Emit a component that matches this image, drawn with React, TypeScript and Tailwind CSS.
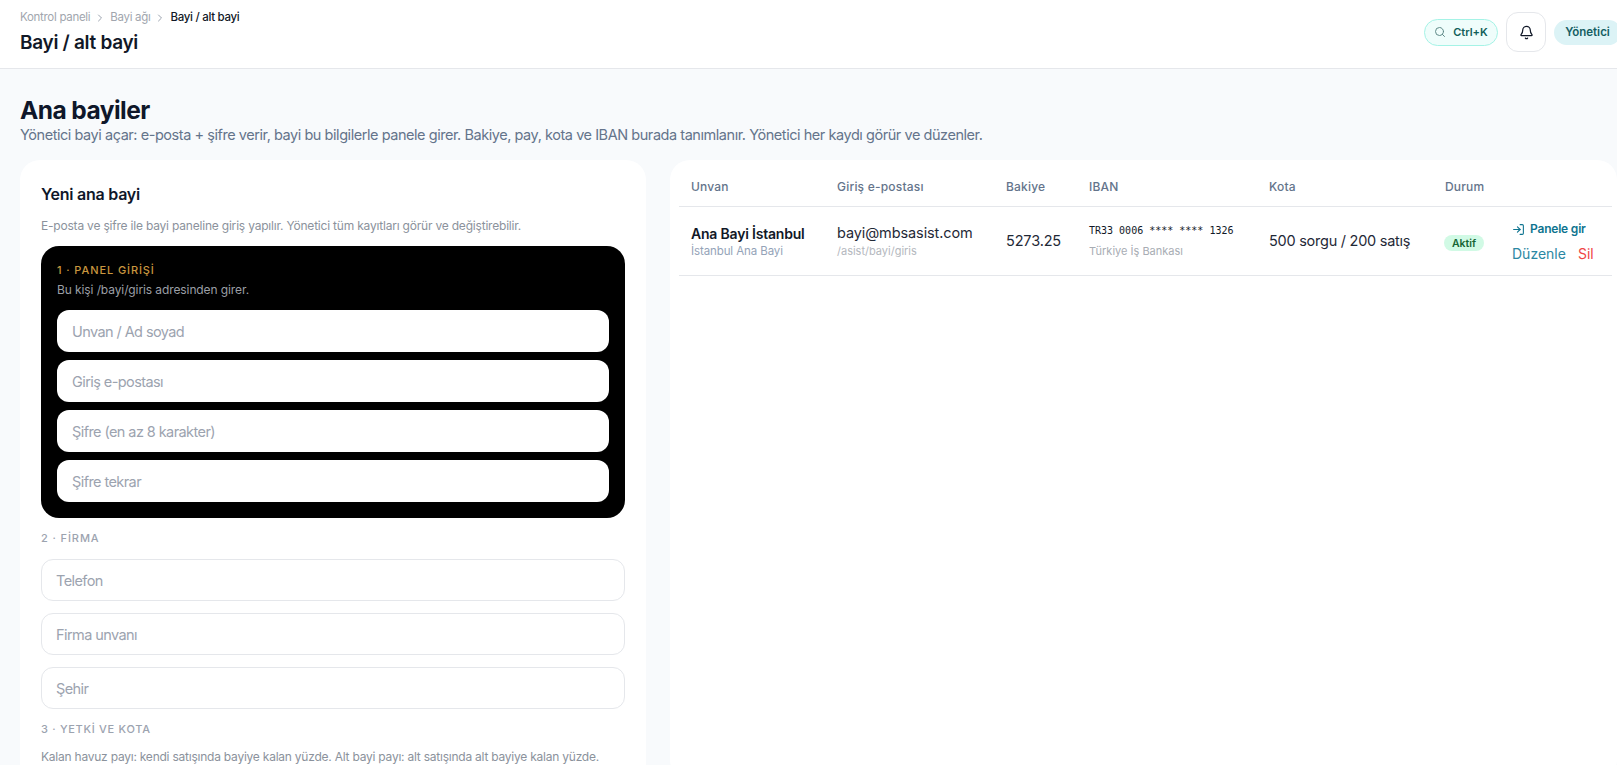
import React from 'react';
import { ChevronRight, Search, Bell, LogIn } from 'lucide-react';

const darkFields = ['Unvan / Ad soyad', 'Giriş e-postası', 'Şifre (en az 8 karakter)', 'Şifre tekrar'];
const firmFields = ['Telefon', 'Firma unvanı', 'Şehir'];

export default function App() {
  return (
    <div className="w-[1617px] h-[765px] overflow-hidden bg-[#f8fafc] font-['Inter',sans-serif] text-[#0f172a]">
      {/* Top bar */}
      <header className="h-[69px] bg-white border-b border-[#e5e7eb] pl-5 flex justify-between items-start">
        <div className="pt-[9px]">
          <div className="flex items-center gap-1 text-[11.5px] leading-[17px] tracking-[-0.3px] text-[#a1a6ae]">
            <span>Kontrol paneli</span>
            <ChevronRight className="w-3 h-3 text-[#9ca3af]" />
            <span>Bayi ağı</span>
            <ChevronRight className="w-3 h-3 text-[#9ca3af]" />
            <span className="text-[#111827] font-medium">Bayi / alt bayi</span>
          </div>
          <h2 className="mt-1 text-[19px] leading-[26px] font-semibold tracking-[-0.3px] text-[#111827]">Bayi / alt bayi</h2>
        </div>
        <div className="flex items-center gap-2 mr-[-4px] mt-3 shrink-0">
          <div className="h-[27px] w-[74px] rounded-full border border-[#a5f3e6] bg-[#effdfb] flex items-center justify-center gap-[7px] text-[11px] font-semibold text-[#115e59]">
            <Search className="w-3 h-3 text-[#5f8a88]" />
            <span>Ctrl+K</span>
          </div>
          <button className="w-10 h-10 rounded-xl border border-[#e5e7eb] bg-white flex items-center justify-center">
            <Bell className="w-[15px] h-[15px] text-[#111827]" />
          </button>
          <div className="h-[25px] w-[67px] pt-px rounded-full bg-[#dcf3f6] flex items-center justify-center text-[11.5px] font-semibold text-[#155e63]">
            Yönetici
          </div>
        </div>
      </header>

      <main className="px-5 pt-[26px]">
        <h1 className="text-[24.5px] leading-[30px] font-bold tracking-[-0.55px] text-[#0f172a]">Ana bayiler</h1>
        <p className="text-[14.5px] leading-[20px] tracking-[-0.45px] text-[#64748b]">
          Yönetici bayi açar: e-posta + şifre verir, bayi bu bilgilerle panele girer. Bakiye, pay, kota ve IBAN burada tanımlanır. Yönetici her kaydı görür ve düzenler.
        </p>

        <div className="mt-[15px] flex gap-6 items-start">
          {/* New dealer form */}
          <section className="w-[626px] shrink-0 bg-white rounded-[20px] px-[21px] pt-[23px] pb-6">
            <h3 className="text-[16px] leading-[22px] font-semibold tracking-[-0.25px] text-[#0f172a]">Yeni ana bayi</h3>
            <p className="mt-[13px] text-[12px] leading-[16px] tracking-[-0.2px] text-[#8b929c]">
              E-posta ve şifre ile bayi paneline giriş yapılır. Yönetici tüm kayıtları görür ve değiştirebilir.
            </p>
            <div className="mt-3 h-[272px] bg-black rounded-[18px] px-4 pt-[17px]">
              <div className="text-[11px] leading-[14px] tracking-[0.9px] font-medium text-[#c9973f]">1 · PANEL GİRİŞİ</div>
              <div className="mt-[5px] text-[12px] leading-[16px] tracking-[-0.1px] text-[#9b9fa5]">Bu kişi /bayi/giris adresinden girer.</div>
              <div className="mt-3 flex flex-col gap-2">
                {darkFields.map((f) => (
                  <input
                    key={f}
                    placeholder={f}
                    className="w-full h-[42px] rounded-xl bg-white px-[15px] text-[14.5px] tracking-[-0.58px] placeholder:text-[#9ca3af] outline-none"
                  />
                ))}
              </div>
            </div>
            <div className="mt-[13px] text-[11px] leading-[14px] tracking-[0.9px] font-medium text-[#9ca3af]">2 · FİRMA</div>
            <div className="mt-[14px] flex flex-col gap-3">
              {firmFields.map((f) => (
                <input
                  key={f}
                  placeholder={f}
                  className="w-full h-[42px] rounded-xl border border-[#e5e7eb] bg-white px-[14px] text-[14.5px] tracking-[-0.58px] placeholder:text-[#9ca3af] outline-none"
                />
              ))}
            </div>
            <div className="mt-[13px] text-[11px] leading-[14px] tracking-[0.7px] font-medium text-[#9ca3af]">3 · YETKİ VE KOTA</div>
            <p className="mt-[13px] text-[12px] leading-[16px] tracking-[-0.23px] text-[#8b929c]">
              Kalan havuz payı: kendi satışında bayiye kalan yüzde. Alt bayi payı: alt satışında alt bayiye kalan yüzde.
            </p>
          </section>

          {/* Dealer table */}
          <section className="w-[947px] shrink-0 h-[620px] bg-white rounded-[20px] pl-[9px] pt-[5px]">
            <table className="w-[933px] table-fixed border-collapse text-left">
              <thead>
                <tr className="border-b border-[#e5e7eb] text-[12px] tracking-[0.2px] text-[#64748b]">
                  <th className="w-[158px] h-[41px] pl-3 pt-1 font-medium">Unvan</th>
                  <th className="w-[169px] pt-1 font-medium">Giriş e-postası</th>
                  <th className="w-[83px] pt-1 font-medium">Bakiye</th>
                  <th className="w-[180px] pt-1 font-medium">IBAN</th>
                  <th className="w-[176px] pt-1 font-medium">Kota</th>
                  <th className="w-[68px] pt-1 font-medium">Durum</th>
                  <th className="font-medium"></th>
                </tr>
              </thead>
              <tbody>
                <tr className="border-b border-[#e5e7eb]">
                  <td className="h-[69px] pl-3">
                    <div className="pt-[2px] text-[14px] leading-[17px] font-semibold tracking-[-0.2px] text-[#111827]">Ana Bayi İstanbul</div>
                    <div className="mt-[2px] text-[11.5px] leading-[14px] tracking-[-0.1px] text-[#94a3b8]">İstanbul Ana Bayi</div>
                  </td>
                  <td>
                    <div className="text-[14.5px] leading-[19px] tracking-[-0.1px] text-[#1f2937]">bayi@mbsasist.com</div>
                    <div className="mt-[2px] text-[11px] leading-[14px] text-[#b4b8be]">/asist/bayi/giris</div>
                  </td>
                  <td className="text-[14.5px] tracking-[-0.15px] text-[#1f2937]">5273.25</td>
                  <td>
                    <div className="font-['DejaVu_Sans_Mono',monospace] text-[10px] leading-[14px] text-[#111827]">TR33 0006 **** **** 1326</div>
                    <div className="mt-[6px] text-[11px] leading-[14px] text-[#a8adb4]">Türkiye İş Bankası</div>
                  </td>
                  <td className="text-[14.5px] tracking-[-0.25px] text-[#1f2937]">500 sorgu / 200 satış</td>
                  <td>
                    <span className="inline-flex h-4 w-10 -ml-px items-center justify-center rounded-full bg-[#d1fae5] text-[10.5px] font-semibold text-[#166534]">Aktif</span>
                  </td>
                  <td>
                    <div className="mt-[3px] -ml-px flex items-center gap-[5px] text-[12px] font-semibold tracking-[-0.2px] text-[#0e7490]">
                      <LogIn className="w-[13px] h-[13px]" />
                      <span>Panele gir</span>
                    </div>
                    <div className="mt-[6px] -ml-px flex gap-3 text-[14px] leading-[20px]">
                      <span className="text-[#2b87a3]">Düzenle</span>
                      <span className="text-[#ef4444]">Sil</span>
                    </div>
                  </td>
                </tr>
              </tbody>
            </table>
          </section>
        </div>
      </main>
    </div>
  );
}
